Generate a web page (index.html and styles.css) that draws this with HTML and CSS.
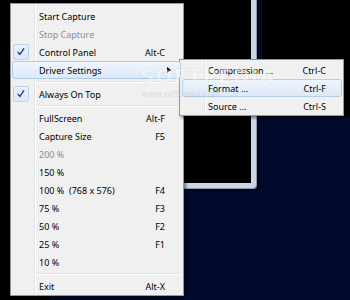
FILE: index.html
```html
<!DOCTYPE html>
<html>
<head>
<meta charset="utf-8">
<link rel="stylesheet" href="styles.css">
</head>
<body>
<div class="desk">
  <div class="win"></div>
  <div class="win-right"></div>
  <div class="left-strip"></div>
  <div class="bottom-strip"></div>

  <div class="menu main">
    <div class="item"><span>Start Capture</span></div>
    <div class="item off"><span>Stop Capture</span></div>
    <div class="item"><span class="check"><svg width="16" height="16" viewBox="0 0 16 16"><path d="M4.5 8.2 L6.8 10.8 L11.2 4.2" fill="none" stroke="#1b3a8f" stroke-width="1.5" stroke-linecap="round" stroke-linejoin="round"/></svg></span><span>Control Panel</span><span>Alt-C</span></div>
    <div class="item hot"><span>Driver Settings</span><span class="arrow"></span></div>
    <div class="sep"></div>
    <div class="item"><span class="check"><svg width="16" height="16" viewBox="0 0 16 16"><path d="M4.5 8.2 L6.8 10.8 L11.2 4.2" fill="none" stroke="#1b3a8f" stroke-width="1.5" stroke-linecap="round" stroke-linejoin="round"/></svg></span><span>Always On Top</span></div>
    <div class="sep"></div>
    <div class="item"><span>FullScreen</span><span>Alt-F</span></div>
    <div class="item"><span>Capture Size</span><span>F5</span></div>
    <div class="item off"><span>200 %</span></div>
    <div class="item"><span>150 %</span></div>
    <div class="item"><span>100 %&nbsp;&nbsp;(768 x 576)</span><span>F4</span></div>
    <div class="item"><span>75 %</span><span>F3</span></div>
    <div class="item"><span>50 %</span><span>F2</span></div>
    <div class="item"><span>25 %</span><span>F1</span></div>
    <div class="item"><span>10 %</span></div>
    <div class="sep"></div>
    <div class="item"><span>Exit</span><span>Alt-X</span></div>
  </div>

  <div class="menu sub">
    <div class="item"><span>Compression ...</span><span>Ctrl-C</span></div>
    <div class="item hot"><span>Format ...</span><span>Ctrl-F</span></div>
    <div class="item"><span>Source ...</span><span>Ctrl-S</span></div>
  </div>

  <div class="wm">SOFTPEDIA</div>
  <div class="wm-url">www.softpedia.com</div>
</div>
</body>
</html>
```

FILE: styles.css
```css
html, body {
  margin: 0;
  padding: 0;
}
body {
  width: 350px;
  height: 300px;
  overflow: hidden;
  font-family: "Noto Sans", "Open Sans", sans-serif;
  font-size: 9px;
  color: #000;
}
.desk {
  position: relative;
  width: 350px;
  height: 300px;
  background: #000a2c;
  overflow: hidden;
}
.win {
  position: absolute;
  left: -6px;
  top: -6px;
  width: 262px;
  height: 194px;
  box-sizing: border-box;
  background: #000;
  border: 5px solid #cad6e2;
  border-radius: 0 0 4px 0;
  box-shadow: inset 1px 1px 0 #e9eff5, 1px 1px 0 #8d9aa8, 2px 2px 3px rgba(0,0,0,0.6);
}
.win-right {
  position: absolute;
  left: 262px;
  top: 0;
  width: 88px;
  height: 117px;
  background: #000;
}
.left-strip {
  position: absolute;
  left: 0;
  top: 0;
  width: 10px;
  height: 300px;
  background: #000;
}
.bottom-strip {
  position: absolute;
  left: 0;
  top: 296px;
  width: 50px;
  height: 4px;
  background: #000;
}
.menu {
  position: absolute;
  box-sizing: border-box;
  background: #f0f0f0;
  border: 1px solid #979797;
  display: flex;
  flex-direction: column;
  box-shadow: 2px 2px 3px rgba(0,0,0,0.45);
}
.menu::before {
  content: "";
  position: absolute;
  top: 0;
  bottom: 0;
  width: 1px;
  background: #e2e3e3;
  box-shadow: 1px 0 0 #ffffff;
}
.main {
  left: 10px;
  top: 3px;
  width: 174px;
  height: 293px;
  padding: 3px 1px 0 1px;
}
.main::before {
  left: 23px;
}
.sub {
  left: 179px;
  top: 59px;
  width: 165px;
  height: 57px;
  padding: 1px 1px 0 2px;
}
.sub::before {
  left: 24px;
}
.item {
  position: relative;
  z-index: 1;
  height: 18px;
  box-sizing: border-box;
  display: flex;
  align-items: center;
  justify-content: space-between;
  padding: 0 15px 0 26px;
  margin-right: 1px;
  white-space: nowrap;
  border: 1px solid transparent;
  border-radius: 3px;
}
.sub .item {
  margin-right: 0;
  padding: 0 15px 0 25px;
}
.item.off {
  color: #8e8e8e;
}
.item.hot {
  border-color: #b2cdea;
  background: linear-gradient(#eef5fd, #dde9f7);
}
.check {
  position: absolute;
  left: 0;
  top: 0;
  width: 16px;
  height: 16px;
  box-sizing: border-box;
  border: 1px solid #bcd3ee;
  border-radius: 2px;
  background: linear-gradient(#eaf1fa, #dce8f6);
  display: flex;
  align-items: center;
  justify-content: center;
}
.check svg {
  display: block;
}
.arrow {
  width: 0;
  height: 0;
  border-left: 4px solid #000;
  border-top: 3.5px solid transparent;
  border-bottom: 3.5px solid transparent;
  margin-right: -6px;
}
.sep {
  height: 6px;
  margin-left: 23px;
  margin-right: 2px;
  box-sizing: border-box;
  padding-top: 2px;
}
.sep::after {
  content: "";
  display: block;
  height: 1px;
  background: #e0e0e0;
  box-shadow: 0 1px 0 #ffffff;
}
.wm {
  position: absolute;
  left: 140px;
  top: 64px;
  z-index: 5;
  font-family: "DejaVu Sans", sans-serif;
  font-weight: bold;
  font-size: 20px;
  letter-spacing: 1px;
  color: rgba(255,255,255,0.45);
  -webkit-text-stroke: 0.5px rgba(120,120,120,0.18);
  pointer-events: none;
}
.wm-url {
  position: absolute;
  left: 142px;
  top: 90px;
  z-index: 5;
  font-family: "DejaVu Sans", sans-serif;
  font-size: 8px;
  color: rgba(160,160,160,0.3);
  pointer-events: none;
}
```
